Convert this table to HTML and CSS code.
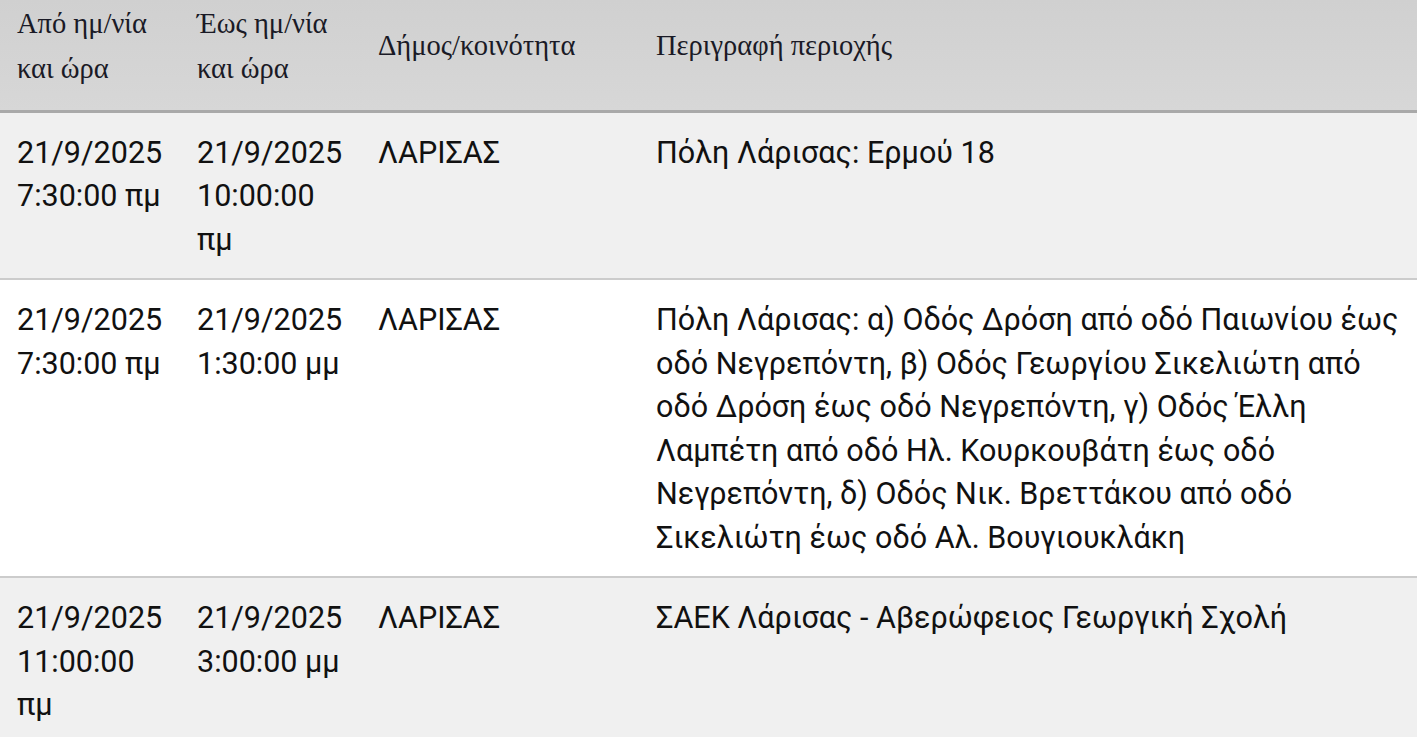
FILE: index.html
```html
<!DOCTYPE html>
<html lang="el">
<head>
<meta charset="utf-8">
<title>Διακοπές ρεύματος</title>
<link rel="stylesheet" href="styles.css">
</head>
<body>
<table class="outages">
  <colgroup>
    <col class="c-from">
    <col class="c-to">
    <col class="c-muni">
    <col class="c-desc">
  </colgroup>
  <thead>
    <tr>
      <th>Από ημ/νία και ώρα</th>
      <th>Έως ημ/νία και ώρα</th>
      <th>Δήμος/κοινότητα</th>
      <th>Περιγραφή περιοχής</th>
    </tr>
  </thead>
  <tbody>
    <tr class="odd">
      <td>21/9/2025 7:30:00 πμ</td>
      <td>21/9/2025 10:00:00 πμ</td>
      <td>ΛΑΡΙΣΑΣ</td>
      <td>Πόλη Λάρισας: Ερμού 18</td>
    </tr>
    <tr class="even">
      <td>21/9/2025 7:30:00 πμ</td>
      <td>21/9/2025 1:30:00 μμ</td>
      <td>ΛΑΡΙΣΑΣ</td>
      <td>Πόλη Λάρισας: α) Οδός Δρόση από οδό Παιωνίου έως οδό Νεγρεπόντη, β) Οδός Γεωργίου Σικελιώτη από οδό Δρόση έως οδό Νεγρεπόντη, γ) Οδός Έλλη Λαμπέτη από οδό Ηλ. Κουρκουβάτη έως οδό Νεγρεπόντη, δ) Οδός Νικ. Βρεττάκου από οδό Σικελιώτη έως οδό Αλ. Βουγιουκλάκη</td>
    </tr>
    <tr class="odd">
      <td>21/9/2025 11:00:00 πμ</td>
      <td>21/9/2025 3:00:00 μμ</td>
      <td>ΛΑΡΙΣΑΣ</td>
      <td>ΣΑΕΚ Λάρισας - Αβερώφειος Γεωργική Σχολή</td>
    </tr>
  </tbody>
</table>
</body>
</html>
```

FILE: styles.css
```css
html, body {
  margin: 0;
  padding: 0;
  background: #ffffff;
}

.outages {
  width: 100%;
  border-collapse: collapse;
  table-layout: fixed;
}

.c-from { width: 180px; }
.c-to { width: 181px; }
.c-muni { width: 278px; }

.outages th {
  background: linear-gradient(#d0d0d0, #d7d7d7);
  border-bottom: 3px solid #a9a9a9;
  font-family: "Liberation Serif", "DejaVu Serif", serif;
  font-weight: normal;
  font-size: 28.5px;
  line-height: 45px;
  color: #1a1a26;
  text-align: left;
  vertical-align: middle;
  padding: 0 12px 18px 17px;
  height: 111px;
  box-sizing: border-box;
}

.outages td {
  font-family: Roboto, "Liberation Sans", sans-serif;
  font-size: 30.5px;
  line-height: 43.5px;
  color: #111111;
  vertical-align: top;
  padding: 18px 12px 17px 17px;
  border-bottom: 2px solid #cccccc;
}

.outages tr.odd td { background: #f0f0f0; }
.outages tr.even td { background: #ffffff; }
```
